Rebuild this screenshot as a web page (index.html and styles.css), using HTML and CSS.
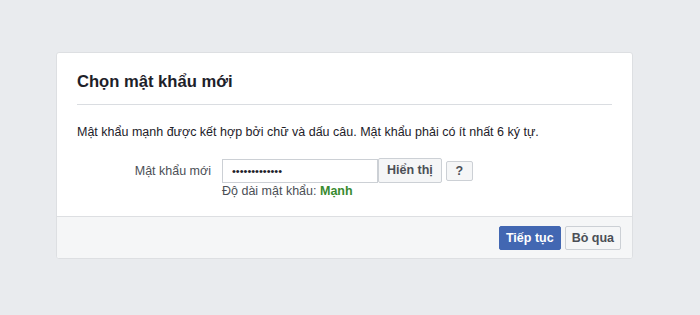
FILE: index.html
```html
<!DOCTYPE html>
<html>
<head>
<meta charset="utf-8">
<title>Chọn mật khẩu mới</title>
<link rel="stylesheet" href="styles.css">
</head>
<body>
	<div class="page">
		<div class="card">
			<div class="card-head">
				<h2>Chọn mật khẩu mới</h2>
			</div>
			<div class="card-body">
				<p class="hint">Mật khẩu mạnh được kết hợp bởi chữ và dấu câu. Mật khẩu phải có ít nhất 6 ký tự.</p>
				<div class="form-row">
					<label class="form-label" for="pw">Mật khẩu mới</label>
					<div class="form-field">
						<div class="field-line">
							<input id="pw" class="pw-input" type="password" value="abcdefghijklm">
							<button class="btn btn-show">Hiển thị</button>
							<button class="btn btn-help">?</button>
						</div>
						<div class="strength">Độ dài mật khẩu: <span class="strong">Mạnh</span></div>
					</div>
				</div>
			</div>
			<div class="card-foot">
				<button class="btn btn-primary">Tiếp tục</button>
				<button class="btn btn-skip">Bỏ qua</button>
			</div>
		</div>
	</div>
</body>
</html>
```

FILE: styles.css
```css
*{
	padding: 0;
	margin: 0;
	box-sizing: border-box;
}
body{
	background: #e9ebee;
	font-family: "Liberation Sans", Arial, sans-serif;
	font-size: 12.5px;
	color: #1d2129;
}
.page{
	padding-top: 52px;
	padding-left: 56px;
}
.card{
	width: 577px;
	background: #fff;
	border: 1px solid #dddfe2;
	border-radius: 3px;
	overflow: hidden;
}
.card-head{
	margin: 0 20px 0 20px;
	padding: 19px 0 12px;
	border-bottom: 1px solid #dadde1;
}
.card-head h2{
	font-size: 16.6px;
	line-height: 20px;
	font-weight: bold;
	color: #1d2129;
}
.card-body{
	padding: 19px 20px 17px;
}
.hint{
	line-height: 16px;
	color: #1d2129;
}
.form-row{
	display: flex;
	margin-top: 19px;
}
.form-label{
	width: 145px;
	padding-right: 11px;
	text-align: right;
	line-height: 24px;
	color: #4b4f56;
}
.field-line{
	display: flex;
	align-items: center;
}
.pw-input{
	width: 156px;
	height: 24px;
	border: 1px solid #ccd0d5;
	padding: 0 9px;
	font-family: "Liberation Sans", Arial, sans-serif;
	font-size: 11px;
	color: #1d2129;
	outline: none;
}
.btn{
	font-family: "Liberation Sans", Arial, sans-serif;
	font-size: 12.5px;
	font-weight: bold;
	border: 1px solid #ccd0d5;
	border-radius: 2px;
	background: #f5f6f7;
	color: #4b4f56;
	cursor: pointer;
}
.btn-show{
	height: 25px;
	padding: 0 8px;
	margin-top: -2px;
}
.btn-help{
	width: 27px;
	height: 20px;
	margin-left: 4px;
}
.strength{
	line-height: 16px;
	color: #4b4f56;
}
.strength .strong{
	font-weight: bold;
	color: #3a8b30;
}
.card-foot{
	display: flex;
	justify-content: flex-end;
	gap: 4px;
	padding: 9px 11px 8px;
	background: #f5f6f7;
	border-top: 1px solid #dddfe2;
}
.card-foot .btn{
	height: 24px;
	padding: 0 6px;
}
.btn-primary{
	background: #4267b2;
	border-color: #4267b2;
	color: #fff;
}
```
